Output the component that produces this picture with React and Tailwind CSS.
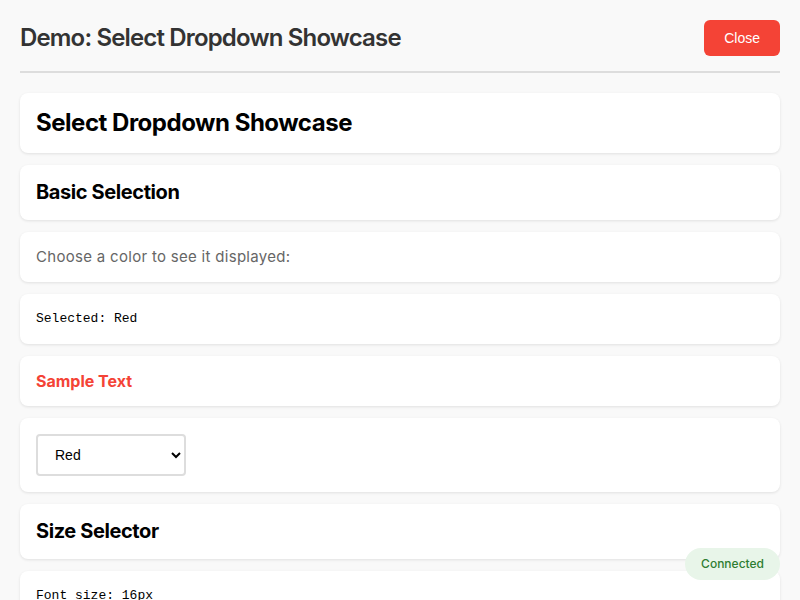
import React, { useState } from 'react';

const Card = ({ children, className = '' }) => (
  <div className={`bg-white rounded-lg px-4 shadow-[0_1px_3px_rgba(0,0,0,0.1)] ${className}`}>
    {children}
  </div>
);

const App = () => {
  const [color, setColor] = useState('Red');

  return (
    <div className="min-h-screen bg-[#f9f9f9] px-5 font-['Inter',sans-serif]">
      <div className="flex items-center justify-between pt-5 pb-[15px] border-b-2 border-[#ddd]">
        <h2 className="text-[24px] font-semibold tracking-[-0.035em] text-[#333]">
          Demo: Select Dropdown Showcase
        </h2>
        <button className="bg-[#f44336] text-white text-sm px-5 h-9 rounded-md font-['Liberation_Sans',sans-serif]">
          Close
        </button>
      </div>

      <div className="flex flex-col gap-3 pt-5">
        <Card className="py-4">
          <h1 className="text-[24px] leading-7 font-bold tracking-[-0.02em] text-black">Select Dropdown Showcase</h1>
        </Card>
        <Card className="py-4">
          <h3 className="text-[20px] leading-[23px] font-bold tracking-[-0.02em] text-black">Basic Selection</h3>
        </Card>
        <Card className="py-4">
          <p className="text-[15px] leading-[18px] tracking-[0.02em] text-[#666]">Choose a color to see it displayed:</p>
        </Card>
        <Card className="py-4">
          <p className="text-[13px] leading-[18px] text-black font-['Liberation_Mono',monospace]">Selected: {color}</p>
        </Card>
        <Card className="py-4">
          <p className="text-base leading-[18px] font-bold text-[#f44336]">Sample Text</p>
        </Card>
        <Card className="py-4">
          <select
            value={color}
            onChange={(e) => setColor(e.target.value)}
            className="w-[150px] h-[42px] border-2 border-[#ddd] rounded pl-[13px] pr-1 text-sm text-black bg-white font-['Liberation_Sans',sans-serif]"
          >
            <option>Red</option>
            <option>Green</option>
            <option>Blue</option>
          </select>
        </Card>
        <Card className="py-4">
          <h3 className="text-[20px] leading-[23px] font-bold tracking-[-0.02em] text-black">Size Selector</h3>
        </Card>
        <Card className="py-4">
          <p className="text-[13px] leading-[18px] text-black font-['Liberation_Mono',monospace]">Font size: 16px</p>
        </Card>
      </div>

      <div className="fixed right-5 bottom-5 bg-[#e8f5e9] text-[#2e7d32] text-xs font-medium px-4 py-2 rounded-full">
        Connected
      </div>
    </div>
  );
};

export default App;
